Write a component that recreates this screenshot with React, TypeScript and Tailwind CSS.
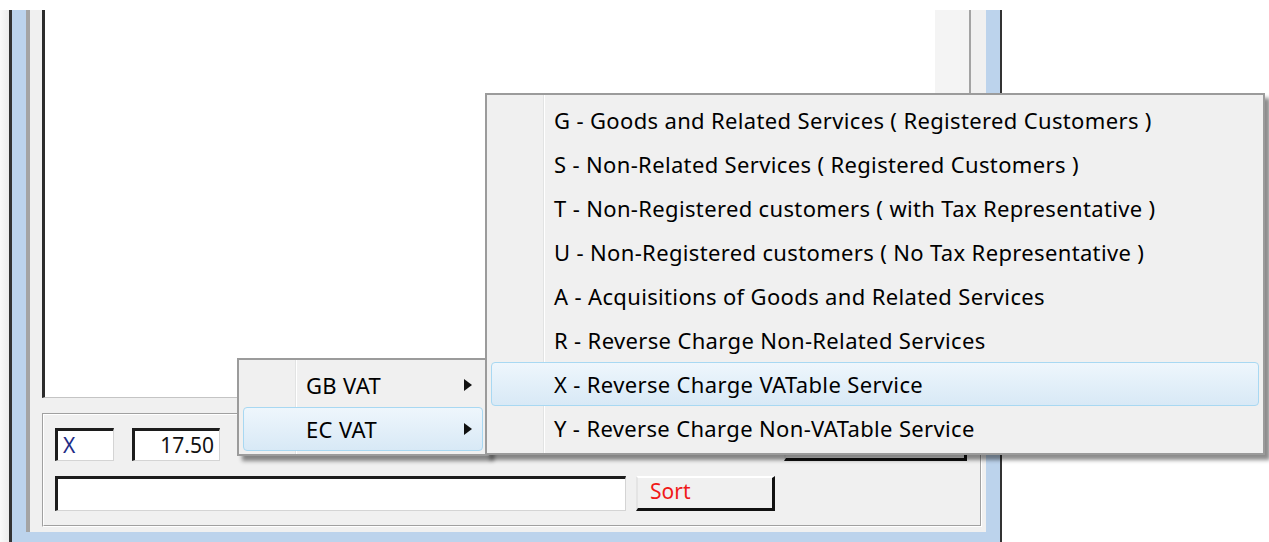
import { ReactNode } from 'react';

const vatCodes = [
  'G - Goods and Related Services ( Registered Customers )',
  'S - Non-Related Services ( Registered Customers )',
  'T - Non-Registered customers ( with Tax Representative )',
  'U - Non-Registered customers ( No Tax Representative )',
  'A - Acquisitions of Goods and Related Services',
  'R - Reverse Charge Non-Related Services',
  'X - Reverse Charge VATable Service',
  'Y - Reverse Charge Non-VATable Service',
];

const font = "font-['Noto_Sans','DejaVu_Sans',sans-serif]";

function SubArrow() {
  return (
    <svg width="8" height="12" viewBox="0 0 8 12" className="shrink-0">
      <path d="M0 0 L8 6 L0 12 Z" fill="#111" />
    </svg>
  );
}

function MenuItem({ label, active, arrow }: { label: string; active?: boolean; arrow?: boolean }) {
  return (
    <div
      className={`mx-[4px] h-[44px] flex items-center rounded-[4px] border pl-[62px] pr-[10px] ${
        active
          ? 'border-[#a8d8f2] bg-gradient-to-b from-[#eef6fc] to-[#d8e9f6]'
          : 'border-transparent'
      }`}
    >
      <span className="flex-1 text-[22px] tracking-[0.35px] leading-none text-black whitespace-nowrap">{label}</span>
      {arrow && <SubArrow />}
    </div>
  );
}

function Menu({ className, children }: { className: string; children: ReactNode }) {
  return (
    <div
      className={`absolute border-2 border-[#9b9b9b] bg-[#f0f0f0] pt-[3px] pb-[3px] shadow-[5px_5px_4px_rgba(0,0,0,0.45)] ${className}`}
    >
      {/* gutter separator */}
      <div className="absolute top-0 bottom-0 left-[56px] w-[2px] border-l border-[#e2e3e3] bg-white" />
      <div className="relative">{children}</div>
    </div>
  );
}

function Sunken({ className, children }: { className: string; children?: ReactNode }) {
  return (
    <div
      className={`bg-white border-t-[3px] border-l-[3px] border-t-[#1c1c1c] border-l-[#1c1c1c] border-r border-b border-r-[#d4d4d4] border-b-[#d4d4d4] flex items-center text-[21px] ${className}`}
    >
      {children}
    </div>
  );
}

function Raised({ className, children }: { className: string; children?: ReactNode }) {
  return (
    <div
      className={`bg-[#f0f0f0] border-t-2 border-l-2 border-t-white border-l-[#e4e4e4] border-r-[3px] border-b-[3px] border-r-[#111] border-b-[#111] flex items-center text-[21px] ${className}`}
    >
      {children}
    </div>
  );
}

export default function App() {
  return (
    <div className={`relative w-[1269px] h-[542px] overflow-hidden bg-white ${font}`}>
      <div className="h-[10px]" />
      <div className="flex h-[532px]">
        <div className="w-[9px] bg-gradient-to-r from-[#fafafa] to-[#ececec]" />

        {/* window frame */}
        <div className="w-[993px] flex flex-col border-l-[3px] border-r-2 border-[#333] bg-[#bcd3ec] px-[14px] pb-[10px]">
          <div className="flex-1 flex flex-col bg-[#f0f0f0] border-l-4 border-l-[#a4a4a4] pl-[12px] pr-[4px]">
            {/* list area */}
            <div className="h-[388px] mr-[11px] flex border-l-[3px] border-l-[#2c2c2c] border-r-2 border-r-[#a3a3a3] border-b border-b-[#c4c4c4]">
              <div className="flex-1 bg-white" />
              <div className="w-[34px] bg-[#f4f4f4]" />
            </div>

            {/* group box */}
            <div className="mt-[15px] h-[114px] border border-t-[#a0a0a0] border-l-[#a0a0a0] border-r-white border-b-white">
              <div className="h-full border border-t-white border-l-white border-r-[#a0a0a0] border-b-[#a0a0a0] pl-[11px] pt-[13px] flex flex-col gap-[15px]">
                <div className="flex h-[33px]">
                  <Sunken className="w-[59px] pl-[5px] text-[#1e2c86]">X</Sunken>
                  <Sunken className="ml-[18px] w-[88px] justify-end pr-[5px] text-[#111]">17.50</Sunken>
                  <Raised className="ml-[564px] w-[183px]" />
                </div>
                <div className="flex h-[35px]">
                  <Sunken className="w-[571px]" />
                  <Raised className="ml-[10px] w-[139px] pl-[12px] pb-[2px] text-[#f01818]">Sort</Raised>
                </div>
              </div>
            </div>
          </div>
        </div>
        <div className="flex-1" />
      </div>

      {/* VAT type menu */}
      <Menu className="left-[237px] top-[358px] w-[252px]">
        <MenuItem label="GB VAT" arrow />
        <MenuItem label="EC VAT" arrow active />
      </Menu>

      {/* EC VAT codes submenu */}
      <Menu className="left-[485px] top-[93px] w-[780px]">
        {vatCodes.map((code) => (
          <MenuItem key={code} label={code} active={code.startsWith('X')} />
        ))}
      </Menu>
    </div>
  );
}
